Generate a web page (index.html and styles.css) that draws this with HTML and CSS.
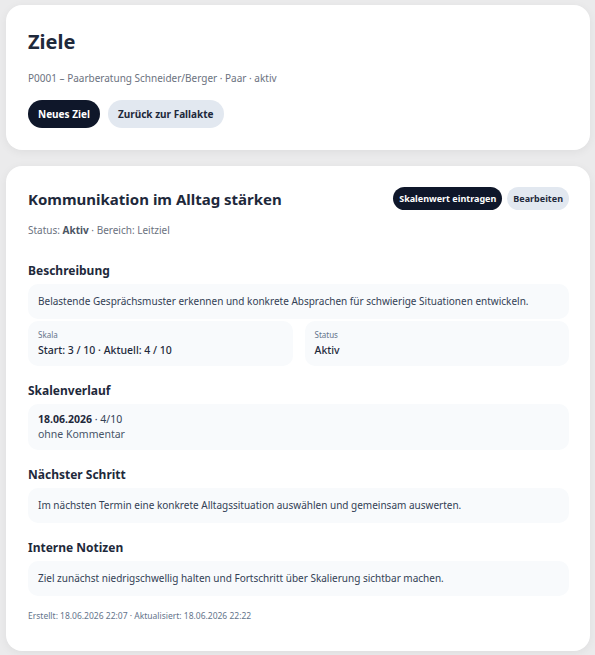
FILE: index.html
```html
<!DOCTYPE html>
<html lang="de">
<head>
    <meta charset="UTF-8">
    <meta name="viewport" content="width=device-width, initial-scale=1.0">
    <title>Ziele</title>
    <link rel="stylesheet" href="styles.css">
</head>
<body>
    <div class="page">
        <div class="panel header">
            <h1 class="page-title">Ziele</h1>
            <div class="muted">P0001 – Paarberatung Schneider/Berger · Paar · aktiv</div>
            <div class="actions">
                <button class="btn btn-dark">Neues Ziel</button>
                <button class="btn btn-light">Zurück zur Fallakte</button>
            </div>
        </div>

        <div class="panel goal">
            <div class="goal-head">
                <h2 class="goal-title">Kommunikation im Alltag stärken</h2>
                <div class="actions small">
                    <button class="btn btn-dark btn-sm">Skalenwert eintragen</button>
                    <button class="btn btn-light btn-sm">Bearbeiten</button>
                </div>
            </div>
            <div class="muted meta">Status: <strong>Aktiv</strong> · Bereich: Leitziel</div>

            <h3 class="section-title first">Beschreibung</h3>
            <div class="box">Belastende Gesprächsmuster erkennen und konkrete Absprachen für schwierige Situationen entwickeln.</div>

            <div class="grid">
                <div class="box field">
                    <div class="label">Skala</div>
                    <div class="value">Start: 3 / 10 · Aktuell: 4 / 10</div>
                </div>
                <div class="box field">
                    <div class="label">Status</div>
                    <div class="value">Aktiv</div>
                </div>
            </div>

            <h3 class="section-title">Skalenverlauf</h3>
            <div class="box entry">
                <div><strong>18.06.2026</strong> · 4/10</div>
                <div class="muted-dark">ohne Kommentar</div>
            </div>

            <h3 class="section-title">Nächster Schritt</h3>
            <div class="box">Im nächsten Termin eine konkrete Alltagssituation auswählen und gemeinsam auswerten.</div>

            <h3 class="section-title">Interne Notizen</h3>
            <div class="box">Ziel zunächst niedrigschwellig halten und Fortschritt über Skalierung sichtbar machen.</div>

            <div class="footer">Erstellt: 18.06.2026 22:07 · Aktualisiert: 18.06.2026 22:22</div>
        </div>
    </div>
</body>
</html>
```

FILE: styles.css
```css
body {
    font-family: 'Noto Sans', 'Open Sans', sans-serif;
    margin: 0;
    background-color: #ebebec;
    color: #1e293b;
}
.page {
    padding: 5px 5px 5px 6px;
    display: flex;
    flex-direction: column;
    gap: 16px;
}
.panel {
    background-color: #ffffff;
    border-radius: 16px;
    padding: 22px 21px 22px 22px;
    box-shadow: 0 2px 10px rgba(0, 0, 0, 0.06);
}
.page-title {
    font-size: 20px;
    font-weight: 700;
    margin: 0 0 14px 0;
    line-height: 30px;
    color: #1e293b;
}
.muted {
    font-size: 10px;
    line-height: 14px;
    color: #6b7280;
}
.muted strong {
    color: #4b5563;
}
.actions {
    display: flex;
    gap: 8px;
    margin-top: 15px;
}
.actions.small {
    gap: 5px;
    margin-top: 0;
}
.btn {
    font-family: inherit;
    font-size: 10px;
    font-weight: 700;
    border: none;
    border-radius: 14px;
    height: 28px;
    padding: 0 10px;
    cursor: pointer;
}
.btn-dark {
    background-color: #0f172a;
    color: #ffffff;
}
.btn-light {
    background-color: #e2e8f0;
    color: #1e293b;
}
.btn-sm {
    height: 23px;
    font-size: 9px;
    padding: 0 6px;
    border-radius: 12px;
}
.goal {
    padding-top: 21px;
    padding-bottom: 29px;
}
.goal-head {
    display: flex;
    justify-content: space-between;
    align-items: center;
}
.goal-title {
    font-size: 15px;
    font-weight: 700;
    margin: 0;
    line-height: 22px;
}
.meta {
    margin-top: 13px;
}
.section-title {
    font-size: 12px;
    font-weight: 700;
    margin: 16px 0 4px 0;
    line-height: 18px;
}
.section-title.first {
    margin-top: 25px;
}
.box {
    background-color: #f8fafc;
    border-radius: 10px;
    padding: 10px;
    font-size: 10px;
    line-height: 15px;
    color: #334155;
}
.grid {
    display: grid;
    grid-template-columns: 1fr 1fr;
    gap: 12px;
    margin-top: 2px;
}
.field {
    padding: 8px 10px;
}
.label {
    font-size: 8px;
    color: #64748b;
    line-height: 12px;
}
.value {
    font-size: 10.5px;
    line-height: 15px;
    font-weight: 500;
    color: #1e293b;
    margin-top: 2px;
}
.entry {
    font-size: 10.5px;
    padding: 8px 10px;
}
.entry strong {
    color: #1e293b;
}
.muted-dark {
    color: #475569;
}
.footer {
    margin-top: 14px;
    font-size: 8.5px;
    line-height: 12px;
    color: #64748b;
}
```
